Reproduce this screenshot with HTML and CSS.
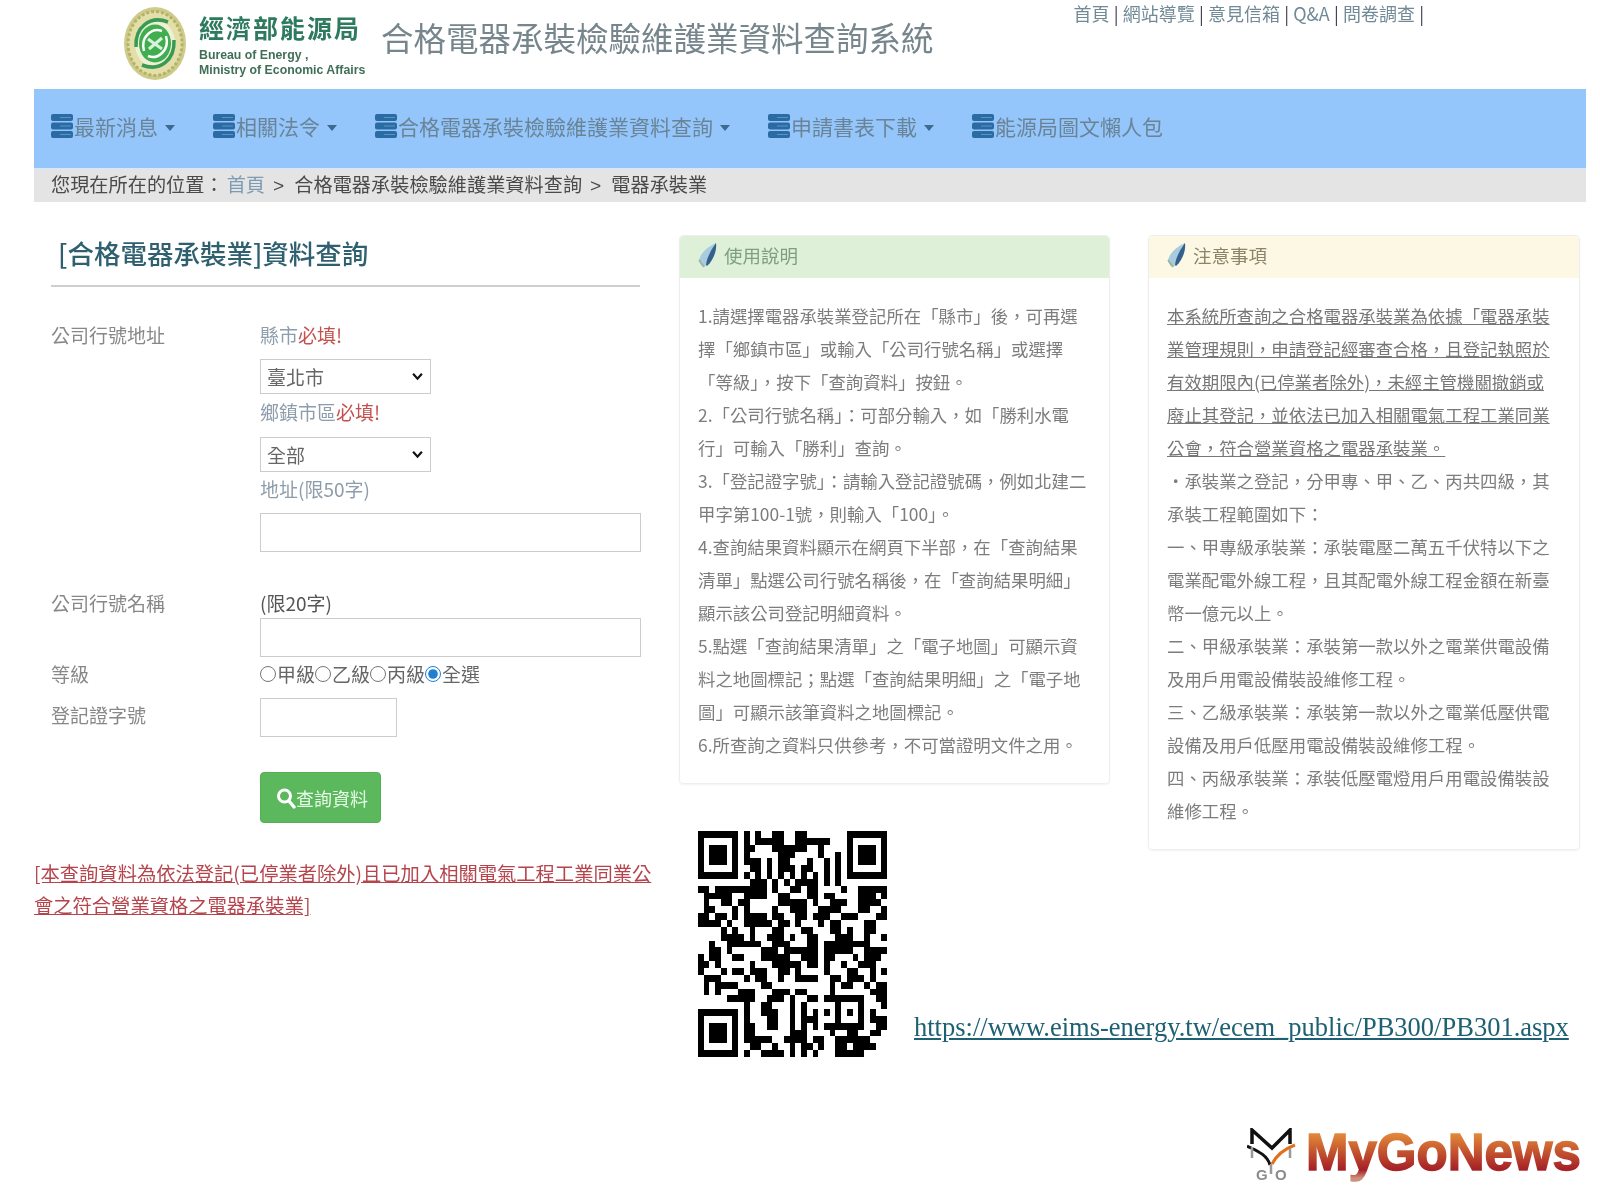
FILE: index.html
```html
<!DOCTYPE html>
<html lang="zh-Hant">
<head>
<meta charset="utf-8">
<title>合格電器承裝檢驗維護業資料查詢系統</title>
<link rel="stylesheet" href="styles.css">
</head>
<body>
<div class="page">
  <header class="site-header">
    <svg class="seal" viewBox="0 0 62 73" preserveAspectRatio="none">
      <ellipse cx="31" cy="36.5" rx="31" ry="36.5" fill="#cfcb8a"/>
      <ellipse cx="31" cy="36.5" rx="27" ry="32" fill="#e3dfa8" stroke="#b5b26a" stroke-width="3" stroke-dasharray="3 2"/>
      <ellipse cx="31" cy="36.5" rx="20" ry="24" fill="#eef0d6"/>
      <ellipse cx="31" cy="36.5" rx="16" ry="19" fill="#3fae4e"/>
      <path d="M20 44C16 30 28 20 38 24M42 29C46 43 34 53 24 49" fill="none" stroke="#fff" stroke-width="2.5"/>
      <path d="M24 32L38 42M38 31L25 42" stroke="#d9f2da" stroke-width="3"/>
      <path d="M12 40C11 20 26 8 44 15M50 33C51 53 36 65 18 58" fill="none" stroke="#3a9a55" stroke-width="3.5"/>
    </svg>
    <div class="brand">
      <div class="brand-zh">經濟部能源局</div>
      <div class="brand-en">Bureau of Energy ,<br>Ministry of Economic Affairs</div>
    </div>
    <h1 class="sys-title">合格電器承裝檢驗維護業資料查詢系統</h1>
    <div class="top-links">首頁<i>|</i>網站導覽<i>|</i>意見信箱<i>|</i>Q&amp;A<i>|</i>問卷調查<i>|</i></div>
  </header>

  <nav class="main-nav">
    <a class="nav-item"><svg class="nav-icon" viewBox="0 0 22 24"><use href="#stack"/></svg>最新消息<b class="caret"></b></a>
    <a class="nav-item"><svg class="nav-icon" viewBox="0 0 22 24"><use href="#stack"/></svg>相關法令<b class="caret"></b></a>
    <a class="nav-item"><svg class="nav-icon" viewBox="0 0 22 24"><use href="#stack"/></svg>合格電器承裝檢驗維護業資料查詢<b class="caret"></b></a>
    <a class="nav-item"><svg class="nav-icon" viewBox="0 0 22 24"><use href="#stack"/></svg>申請書表下載<b class="caret"></b></a>
    <a class="nav-item"><svg class="nav-icon" viewBox="0 0 22 24"><use href="#stack"/></svg>能源局圖文懶人包</a>
  </nav>

  <div class="crumbs">您現在所在的位置&#65306;<a class="crumb-home">首頁</a><span class="crumb-sep">&gt;</span>合格電器承裝檢驗維護業資料查詢<span class="crumb-sep">&gt;</span>電器承裝業</div>

  <main class="main">
    <section class="col-form">
      <h2 class="form-title">[合格電器承裝業]資料查詢</h2>
      <div class="form-grid">
        <div class="f-label">公司行號地址</div>
        <div class="f-stack">
          <div class="f-hint">縣市<span class="req">必填!</span></div>
          <select class="f-select s1"><option>臺北市</option></select>
          <div class="f-hint h2">鄉鎮市區<span class="req">必填!</span></div>
          <select class="f-select s2"><option>全部</option></select>
          <div class="f-hint h3">地址(限50字)</div>
          <input class="f-input i1" type="text">
        </div>
        <div class="f-label r2">公司行號名稱</div>
        <div class="f-stack r2">
          <div class="f-plain">(限20字)</div>
          <input class="f-input i2" type="text">
        </div>
        <div class="f-label r3">等級</div>
        <div class="f-radios r3">
          <label class="radio"><input type="radio" name="g">甲級</label>
          <label class="radio"><input type="radio" name="g">乙級</label>
          <label class="radio"><input type="radio" name="g">丙級</label>
          <label class="radio"><input type="radio" name="g" checked>全選</label>
        </div>
        <div class="f-label r4">登記證字號</div>
        <div class="f-stack r4b"><input class="f-input i3" type="text"></div>
        <div class="f-btn-cell">
          <button class="search-btn" type="button">
            <svg class="search-ico" viewBox="0 0 20 22"><circle cx="8.5" cy="9" r="6" fill="none" stroke="#fff" stroke-width="3"/><path d="M13 14l5 6" stroke="#fff" stroke-width="3.4" stroke-linecap="round"/></svg>查詢資料
          </button>
        </div>
      </div>
      <p class="red-note">[本查詢資料為依法登記(已停業者除外)且已加入相關電氣工程工業同業公會之符合營業資格之電器承裝業]</p>
    </section>

    <section class="col-mid">
      <div class="panel">
        <div class="panel-head green"><svg class="quill" viewBox="0 0 20 26"><use href="#quill"/></svg>使用說明</div>
        <div class="panel-body">
          <div>1.請選擇電器承裝業登記所在「縣市」後&#65292;可再選擇「鄉鎮市區」或輸入「公司行號名稱」或選擇「等級」&#65292;按下「查詢資料」按鈕。</div>
          <div>2.「公司行號名稱」&#65306;可部分輸入&#65292;如「勝利水電行」可輸入「勝利」查詢。</div>
          <div>3.「登記證字號」&#65306;請輸入登記證號碼&#65292;例如北建二甲字第100-1號&#65292;則輸入「100」。</div>
          <div>4.查詢結果資料顯示在網頁下半部&#65292;在「查詢結果清單」點選公司行號名稱後&#65292;在「查詢結果明細」顯示該公司登記明細資料。</div>
          <div>5.點選「查詢結果清單」之「電子地圖」可顯示資料之地圖標記&#65307;點選「查詢結果明細」之「電子地圖」可顯示該筆資料之地圖標記。</div>
          <div>6.所查詢之資料只供參考&#65292;不可當證明文件之用。</div>
        </div>
      </div>
      <div class="qr-row">
        <svg class="qr" viewBox="0 0 33 33" preserveAspectRatio="none" shape-rendering="crispEdges">
          <path fill-rule="evenodd" d="M0 0h7v7h-7zM1 1v5h5v-5zM2 2h3v3h-3zM26 0h7v7h-7zM27 1v5h5v-5zM28 2h3v3h-3zM0 26h7v7h-7zM1 27v5h5v-5zM2 28h3v3h-3z"/>
          <path stroke="#000" stroke-width="1" d="M8 .5h1M10 .5h1M13 .5h2M17 .5h2M8 1.5h1M10 1.5h5M17 1.5h6M8 2.5h2M13 2.5h6M21 2.5h1M8 3.5h1M14 3.5h3M21 3.5h1M24 3.5h1M8 4.5h3M12 4.5h1M14 4.5h2M19 4.5h1M22 4.5h1M24 4.5h1M9 5.5h2M12 5.5h1M14 5.5h3M18 5.5h2M22 5.5h1M24 5.5h1M8 6.5h1M10 6.5h1M12 6.5h1M14 6.5h1M16 6.5h1M18 6.5h1M20 6.5h1M22 6.5h1M24 6.5h1M9 7.5h3M13 7.5h1M15 7.5h1M17 7.5h4M22 7.5h1M24 7.5h1M0 8.5h2M3 8.5h9M13 8.5h1M16 8.5h2M19 8.5h2M25 8.5h1M28 8.5h5M1 9.5h5M8 9.5h4M14 9.5h2M19 9.5h2M22 9.5h2M28 9.5h3M32 9.5h1M1 10.5h1M4 10.5h2M7 10.5h2M14 10.5h5M20 10.5h1M23 10.5h3M28 10.5h4M1 11.5h2M6 11.5h1M8 11.5h1M13 11.5h1M16 11.5h3M21 11.5h4M28 11.5h2M32 11.5h1M0 12.5h2M3 12.5h2M6 12.5h1M8 12.5h4M13 12.5h2M17 12.5h2M20 12.5h3M25 12.5h3M31 12.5h2M0 13.5h4M5 13.5h1M8 13.5h5M14 13.5h2M17 13.5h1M21 13.5h1M23 13.5h2M29 13.5h2M4 14.5h1M6 14.5h1M9 14.5h1M13 14.5h2M18 14.5h2M23 14.5h2M26 14.5h1M29 14.5h2M4 15.5h4M9 15.5h1M12 15.5h3M16 15.5h1M19 15.5h2M24 15.5h3M29 15.5h1M32 15.5h1M2 16.5h1M5 16.5h6M13 16.5h3M19 16.5h2M22 16.5h8M2 17.5h2M5 17.5h1M11 17.5h3M15 17.5h6M22 17.5h5M29 17.5h4M0 18.5h1M2 18.5h2M6 18.5h2M11 18.5h5M18 18.5h3M22 18.5h2M27 18.5h1M29 18.5h3M0 19.5h2M3 19.5h1M9 19.5h1M13 19.5h5M19 19.5h2M22 19.5h1M25 19.5h1M28 19.5h3M0 20.5h1M4 20.5h1M6 20.5h2M9 20.5h3M14 20.5h2M17 20.5h1M22 20.5h1M26 20.5h2M30 20.5h1M32 20.5h1M1 21.5h3M8 21.5h1M10 21.5h2M14 21.5h1M17 21.5h4M23 21.5h2M26 21.5h3M30 21.5h1M1 22.5h1M3 22.5h4M11 22.5h2M23 22.5h1M25 22.5h2M29 22.5h1M31 22.5h2M1 23.5h1M3 23.5h1M7 23.5h3M13 23.5h3M17 23.5h2M23 23.5h1M30 23.5h3M5 24.5h5M12 24.5h3M16 24.5h1M19 24.5h2M22 24.5h7M31 24.5h2M8 25.5h1M11 25.5h2M16 25.5h1M18 25.5h1M24 25.5h1M28 25.5h1M32 25.5h1M8 26.5h1M11 26.5h3M16 26.5h1M18 26.5h1M20 26.5h1M22 26.5h1M24 26.5h1M26 26.5h1M28 26.5h1M30 26.5h1M8 27.5h1M12 27.5h2M16 27.5h1M18 27.5h3M24 27.5h1M28 27.5h1M30 27.5h3M8 28.5h2M12 28.5h2M16 28.5h1M18 28.5h1M20 28.5h1M22 28.5h7M31 28.5h2M8 29.5h2M16 29.5h3M23 29.5h1M26 29.5h2M30 29.5h2M8 30.5h5M15 30.5h4M20 30.5h2M24 30.5h6M9 31.5h2M13 31.5h1M16 31.5h1M18 31.5h2M21 31.5h1M24 31.5h2M27 31.5h4M8 32.5h1M11 32.5h4M16 32.5h1M18 32.5h1M20 32.5h1M24 32.5h5"/>
        </svg>
        <a class="qr-link">https://www.eims-energy.tw/ecem_public/PB300/PB301.aspx</a>
      </div>
    </section>

    <section class="col-right">
      <div class="panel tall">
        <div class="panel-head yellow"><svg class="quill" viewBox="0 0 20 26"><use href="#quill"/></svg>注意事項</div>
        <div class="panel-body">
          <div class="lead">本系統所查詢之合格電器承裝業為依據「電器承裝業管理規則&#65292;申請登記經審查合格&#65292;且登記執照於有效期限內(已停業者除外)&#65292;未經主管機關撤銷或廢止其登記&#65292;並依法已加入相關電氣工程工業同業公會&#65292;符合營業資格之電器承裝業。</div>
          <div>•承裝業之登記&#65292;分甲專、甲、乙、丙共四級&#65292;其承裝工程範圍如下&#65306;</div>
          <div>一、甲專級承裝業&#65306;承裝電壓二萬五千伏特以下之電業配電外線工程&#65292;且其配電外線工程金額在新臺幣一億元以上。</div>
          <div>二、甲級承裝業&#65306;承裝第一款以外之電業供電設備及用戶用電設備裝設維修工程。</div>
          <div>三、乙級承裝業&#65306;承裝第一款以外之電業低壓供電設備及用戶低壓用電設備裝設維修工程。</div>
          <div>四、丙級承裝業&#65306;承裝低壓電燈用戶用電設備裝設維修工程。</div>
        </div>
      </div>
    </section>
  </main>
</div>

<div class="watermark">
  <svg class="mg-mark" viewBox="0 0 50 56">
    <path d="M5 16V2L25 20L43 2V16" fill="none" stroke="#111" stroke-width="3.5"/>
    <path d="M0 18C8 22 20 26 23 37" fill="none" stroke="#111" stroke-width="3"/>
    <path d="M48 17C40 20 30 26 25 36" fill="none" stroke="#e0701c" stroke-width="3"/>
    <path d="M5 19V30M43 21V30M24 36V46" stroke="#999" stroke-width="2.5"/>
    <text class="mg-go" x="9" y="52">G</text><text class="mg-go" x="28" y="52">O</text>
  </svg>
  <span class="mg-word">MyGoNews</span>
</div>

<svg class="defs">
  <defs>
    <g id="stack">
      <rect x="0" y="0" width="22" height="7" rx="2" fill="#2b6ba4"/>
      <rect x="0" y="8.5" width="22" height="7" rx="2" fill="#2b6ba4"/>
      <rect x="0" y="17" width="22" height="7" rx="2" fill="#2b6ba4"/>
      <path d="M9 3.5h11M9 12h11M9 20.5h11" stroke="#5d92c4" stroke-width="1"/>
    </g>
    <g id="quill">
      <path d="M1 18C3 11 9 5 18 1C19 9 15 19 6 25C3 24 1 21 1 18Z" fill="#a9cbe0"/>
      <path d="M8 23C9 15 13 8 18 1C19 9 15 19 9 24Z" fill="#35608c"/>
      <path d="M1 18L6 25" stroke="#9db38f" stroke-width="1.5"/>
    </g>
  </defs>
</svg>
</body>
</html>
```
FILE: styles.css
```css
* { box-sizing: border-box; }
html, body { margin: 0; padding: 0; background: #fff; }
body {
  font-family: "Noto Sans CJK TC", "Noto Sans", sans-serif;
  color: #777;
  height: 1200px;
  overflow: hidden;
  position: relative;
}
.defs { width: 0; height: 0; position: absolute; }
.page { padding: 0 14px 0 34px; filter: blur(.5px); }

/* header */
.site-header { display: flex; height: 89px; padding-left: 90px; align-items: flex-start; }
.seal { width: 62px; height: 73px; margin-top: 7px; flex: none; }
.brand { margin-left: 13px; width: 172px; flex: none; padding-top: 11px; }
.brand-zh { font-size: 25px; font-weight: 700; line-height: 33px; letter-spacing: 2px; color: #2d7a5f; white-space: nowrap; }
.brand-en { font-family: "Liberation Sans", sans-serif; font-size: 12.3px; font-weight: 700; line-height: 15px; color: #3f6f58; margin-top: 4px; white-space: nowrap; }
.sys-title { margin: 13px 0 0 10px; font-size: 32.5px; font-weight: 400; line-height: 48px; color: #76868c; white-space: nowrap; }
.top-links { margin-left: 140px; font-size: 18px; line-height: 26px; color: #718a96; white-space: nowrap; }
.top-links i { font-style: normal; color: #445; margin: 0 4.2px; }

/* nav */
.main-nav { display: flex; align-items: center; height: 79px; background: #94c6fc; padding: 0 0 6px 17px; gap: 38px; }
.nav-item { display: flex; align-items: center; font-size: 21px; color: #6a8497; white-space: nowrap; }
.nav-icon { width: 22px; height: 24px; margin-right: 1px; flex: none; }
.caret { width: 0; height: 0; margin-left: 7px; margin-top: 5px; border: 5px solid transparent; border-top: 6px solid #3d6a8e; border-bottom: 0; }

/* breadcrumb */
.crumbs { height: 34px; line-height: 29px; background: #e4e4e4; border-top: 2px solid #dbe6f2; padding-left: 17px; font-size: 19.2px; color: #4a4a4a; white-space: nowrap; }
.crumb-home { color: #7d9bb4; margin-left: 3px; }
.crumb-sep { font-family: "Liberation Sans", sans-serif; margin: 0 10px 0 8px; }

/* main */
.main { display: flex; padding-top: 33px; align-items: flex-start; }
.col-form { width: 645px; flex: none; }
.col-mid { width: 431px; flex: none; }
.col-right { width: 432px; flex: none; margin-left: 38px; }

.form-title { margin: 0 0 0 17px; width: 589px; padding: 0 0 15px 7px; border-bottom: 2px solid #cfcfcf; font-size: 26.5px; font-weight: 500; line-height: 35px; color: #2f6070; white-space: nowrap; }
.form-grid { display: grid; grid-template-columns: 209px 381px; margin: 36px 0 0 17px; }
.f-label { font-size: 19px; line-height: 24px; color: #888; }
.f-stack { display: flex; flex-direction: column; align-items: flex-start; }
.f-hint { font-size: 19px; line-height: 24px; color: #8e9dab; }
.req { color: #c4504d; }
.f-plain { font-size: 19px; line-height: 24px; color: #555; }
.f-select {
  width: 171px; height: 35px; border: 1px solid #ccc; border-radius: 0;
  appearance: none; -webkit-appearance: none;
  background: #fff url("data:image/svg+xml,%3Csvg xmlns='http://www.w3.org/2000/svg' viewBox='0 0 10 8'%3E%3Cpath d='M1 1.5L5 6L9 1.5' fill='none' stroke='%23111' stroke-width='2'/%3E%3C/svg%3E") no-repeat right 7px center / 11px 9px;
  font: inherit; font-size: 19px; color: #666; padding: 0 6px;
}
.s1 { margin-top: 12px; }
.h2 { margin-top: 6px; }
.s2 { margin-top: 13px; }
.h3 { margin-top: 5px; }
.f-input { display: block; width: 381px; height: 39px; border: 1px solid #ccc; background: #fff; }
.i1 { margin-top: 12px; }
.i2 { margin-top: 3px; }
.i3 { width: 137px; }
.r2 { margin-top: 39px; }
.r3 { margin-top: 5px; margin-bottom: 1px; }
.r4 { margin-top: 16px; }
.r4b { margin-top: 11px; }
.f-radios { display: flex; font-size: 19px; line-height: 24px; color: #666; }
.radio { display: flex; align-items: center; }
.radio input { width: 16px; height: 16px; margin: 0 1px 0 0; accent-color: #1f7fd1; }
.f-btn-cell { grid-column: 2; margin-top: 35px; }
.search-btn { display: flex; align-items: center; width: 121px; height: 51px; padding: 0 0 0 15px; border: 1px solid #55ad55; border-radius: 4px; background: #5cb85c; color: #e8fbe8; font: inherit; font-size: 18px; }
.search-ico { width: 20px; height: 22px; flex: none; }
.red-note { margin: 34px 0 0; width: 625px; font-size: 19.3px; line-height: 32px; color: #b5444c; text-decoration: underline; }

/* panels */
.panel { border: 1px solid #eee; border-radius: 4px; box-shadow: 0 1px 2px rgba(0,0,0,.05); }
.panel-head { display: flex; align-items: center; height: 42px; padding: 0 0 4px 18px; font-size: 18.5px; border-radius: 4px 4px 0 0; }
.panel-head.green { background: #dff0d8; color: #7f9e84; }
.panel-head.yellow { background: #fcf8e3; color: #8a8568; }
.quill { width: 20px; height: 26px; margin-right: 6px; flex: none; }
.panel-body { padding: 21px 22px 22px 18px; font-size: 17.4px; line-height: 33px; color: #7d7d7d; }
.lead { text-decoration: underline; color: #777; }

.qr-row { display: flex; margin: 47px 0 0 19px; width: 431px; }
.qr { width: 189px; height: 226px; flex: none; }
.qr-link { margin: 180px 0 0 27px; font-family: "Liberation Serif", serif; font-size: 26.5px; line-height: 32px; height: 36px; color: #1d6173; text-decoration: underline; white-space: nowrap; }

/* watermark */
.watermark { position: absolute; left: 1247px; top: 1128px; display: flex; align-items: flex-start; filter: blur(.4px); }
.mg-mark { width: 50px; height: 56px; flex: none; }
.mg-go { font-family: "Liberation Sans", sans-serif; font-size: 15px; font-weight: 700; fill: #8b8b8b; }
.mg-word { margin: -5px 0 0 9px; font-family: "Liberation Sans", sans-serif; font-weight: 700; font-size: 51px; line-height: 60px; background: linear-gradient(#e58e3a 15%, #a51f26 78%, #cf8f7d 92%); -webkit-background-clip: text; background-clip: text; color: transparent; -webkit-text-stroke: 1.5px transparent; white-space: nowrap; }
```
